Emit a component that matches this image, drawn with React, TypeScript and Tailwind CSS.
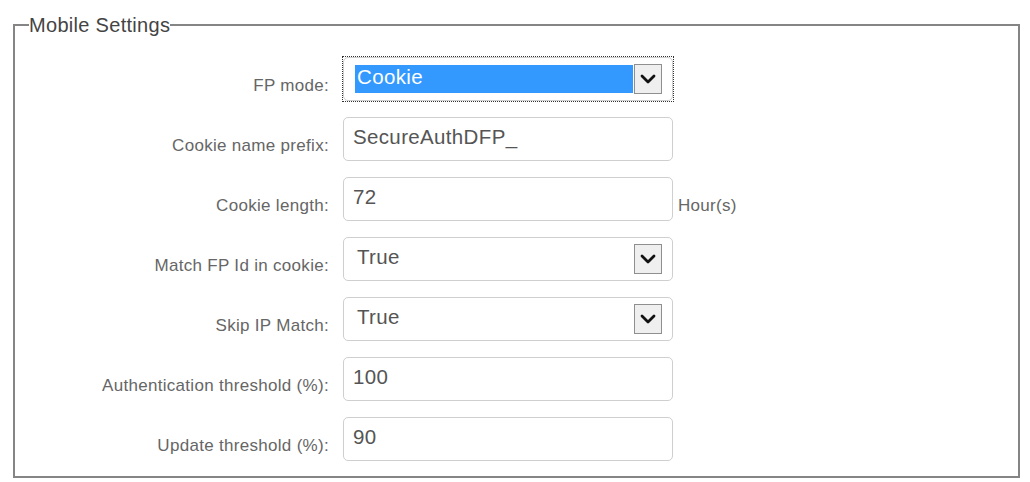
import type { ReactNode } from "react";

function Chevron() {
  return (
    <svg width="16" height="10" viewBox="0 0 16 10" aria-hidden="true">
      <polyline
        points="2,2 8,8 14,2"
        fill="none"
        stroke="#111"
        strokeWidth="2.8"
        strokeLinecap="round"
        strokeLinejoin="round"
      />
    </svg>
  );
}

function ArrowBox() {
  return (
    <div className="flex h-[30px] w-[28px] shrink-0 items-center justify-center border border-[#8f8f8f] bg-[#efefef]">
      <Chevron />
    </div>
  );
}

function TextBox({ value }: { value: string }) {
  return (
    <div className="flex h-[44px] w-[330px] items-center rounded-[5px] border border-[#cfcfcf] bg-white pb-[3px] pl-[9px] text-[20.5px] tracking-[0.35px] text-[#555]">
      {value}
    </div>
  );
}

function SelectBox({ value, focused }: { value: string; focused?: boolean }) {
  const box = (
    <div className="flex h-[44px] w-[330px] items-center justify-between rounded-[5px] border border-[#cfcfcf] bg-white pl-[11px] pr-[10px]">
      {focused ? (
        <div className="flex h-[28px] w-[278px] items-center bg-[#3399ff] pb-[3px] pl-[2px] text-[20.5px] tracking-[0.35px] text-white">
          {value}
        </div>
      ) : (
        <div className="pb-[3px] pl-[2px] text-[20.5px] tracking-[0.35px] text-[#555]">{value}</div>
      )}
      <ArrowBox />
    </div>
  );
  if (!focused) return box;
  return <div className="-m-px border border-dotted border-[#333]">{box}</div>;
}

function Row({ label, unit, children }: { label: string; unit?: string; children: ReactNode }) {
  return (
    <div className="flex items-end">
      <div className="w-[314px] pb-[5px] text-right text-[17px] leading-[20px] tracking-[0.3px] text-[#666]">
        {label}
      </div>
      <div className="ml-[14px]">{children}</div>
      {unit && (
        <div className="ml-[5px] pb-[5px] text-[17px] leading-[20px] tracking-[0.3px] text-[#666]">{unit}</div>
      )}
    </div>
  );
}

export default function App() {
  return (
    <div className="min-h-[482px] bg-white pt-[15px] font-['Liberation_Sans',Arial,sans-serif]">
      <fieldset className="ml-[13px] w-[1007px] border-2 border-[#858585] pb-[15px] pt-[22px]">
        <legend className="ml-[14px] px-0 text-[20px] leading-[20px] tracking-[0.3px] text-[#444]">
          Mobile Settings
        </legend>
        <div className="flex flex-col gap-[16px]">
          <Row label="FP mode:">
            <SelectBox value="Cookie" focused />
          </Row>
          <Row label="Cookie name prefix:">
            <TextBox value="SecureAuthDFP_" />
          </Row>
          <Row label="Cookie length:" unit="Hour(s)">
            <TextBox value="72" />
          </Row>
          <Row label="Match FP Id in cookie:">
            <SelectBox value="True" />
          </Row>
          <Row label="Skip IP Match:">
            <SelectBox value="True" />
          </Row>
          <Row label="Authentication threshold (%):">
            <TextBox value="100" />
          </Row>
          <Row label="Update threshold (%):">
            <TextBox value="90" />
          </Row>
        </div>
      </fieldset>
    </div>
  );
}
